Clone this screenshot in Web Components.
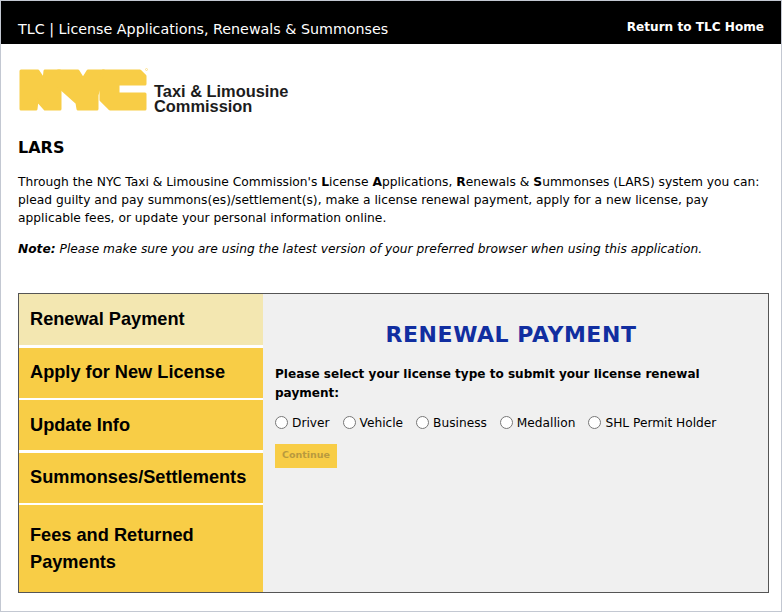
<!doctype html>
<html>
<head>
<meta charset="utf-8">
<title>LARS</title>
<style>
  html, body { margin: 0; height: 100%; background: #fff; }
  body { box-sizing: border-box; height: 612px; border: 1px solid #c3c8d2; overflow: hidden;
    font-family: "DejaVu Sans", Verdana, sans-serif; }
</style>
</head>
<body>
<tlc-header></tlc-header>
<tlc-logo></tlc-logo>
<tlc-intro></tlc-intro>
<tlc-panel>
  <tlc-tab active>Renewal Payment</tlc-tab>
  <tlc-tab>Apply for New License</tlc-tab>
  <tlc-tab>Update Info</tlc-tab>
  <tlc-tab>Summonses/Settlements</tlc-tab>
  <tlc-tab tall>Fees and Returned Payments</tlc-tab>
  <tlc-renewal slot="content"></tlc-renewal>
</tlc-panel>
<script>
class TlcHeader extends HTMLElement {
  constructor() {
    super();
    this.attachShadow({ mode: "open" }).innerHTML = `
      <style>
        :host { display: flex; justify-content: space-between; height: 43px; background: #000; color: #fff;
          padding: 0 17px; }
        #title { font-size: 14.27px; line-height: 17px; margin-top: 20px; }
        #home { font-size: 12.1px; font-weight: bold; line-height: 16px; margin-top: 18px; }
      </style>
      <div id="title">TLC | License Applications, Renewals &amp; Summonses</div>
      <div id="home">Return to TLC Home</div>`;
  }
}

class TlcLogo extends HTMLElement {
  constructor() {
    super();
    this.attachShadow({ mode: "open" }).innerHTML = `
      <style>
        :host { display: flex; height: 44px; margin: 24px 0 0 17px; align-items: flex-end; }
        svg { display: block; width: 130px; height: 44px; flex: none; }
        #name { font: bold 16.4px/15px "Liberation Sans", Arial, sans-serif; color: #1c1c1c; margin: 0 0 -2px 6px; }
      </style>
      <svg viewBox="0 0 130 44" fill="#f8cd46" stroke="#f8cd46" stroke-width="3" stroke-linejoin="round">
        <path d="M3 3H20L26 12L27 3H42V41H27L19 32L18 41H3Z"/>
        <path d="M40 3H60L65 11L70 3H86L79 27V41H60L59 35L40 18Z"/>
        <path d="M85 3H122L127 8V16H100V26H127V41H92L83 32V10Z"/>
        <circle cx="128.5" cy="1.5" r="1" fill="none" stroke-width=".5"/>
      </svg>
      <div id="name">Taxi &amp; Limousine<br>Commission</div>`;
  }
}

class TlcIntro extends HTMLElement {
  constructor() {
    super();
    this.attachShadow({ mode: "open" }).innerHTML = `
      <style>
        :host { display: block; margin: 26px 17px 0; color: #000; font-size: 12.27px; line-height: 18px; }
        h1 { font-size: 16px; line-height: 20px; margin: 0 0 15px; }
        p { margin: 0 0 13px; }
        #note { font-size: 12.22px; }
      </style>
      <h1>LARS</h1>
      <p>Through the NYC Taxi &amp; Limousine Commission's <b>L</b>icense <b>A</b>pplications, <b>R</b>enewals &amp; <b>S</b>ummonses (LARS) system you can: plead guilty and pay summons(es)/settlement(s), make a license renewal payment, apply for a new license, pay applicable fees, or update your personal information online.</p>
      <p id="note"><b><i>Note:</i></b> <i>Please make sure you are using the latest version of your preferred browser when using this application.</i></p>`;
  }
}

class TlcPanel extends HTMLElement {
  constructor() {
    super();
    this.attachShadow({ mode: "open" }).innerHTML = `
      <style>
        :host { display: flex; box-sizing: border-box; height: 300px; width: 751px; margin: 35px 0 0 17px;
          border: 1px solid #555; background: #f0f0f0; }
        #tabs { display: flex; flex-direction: column; gap: 2.5px; width: 244px; flex: none; background: #fff; }
        #content { flex: 1; }
      </style>
      <div id="tabs"><slot></slot></div>
      <div id="content"><slot name="content"></slot></div>`;
  }
}

class TlcTab extends HTMLElement {
  constructor() {
    super();
    this.attachShadow({ mode: "open" }).innerHTML = `
      <style>
        :host { display: flex; align-items: center; box-sizing: border-box; height: 50px; padding: 0 11px;
          background: #f8cd46; color: #000; font: bold 18.2px/27px "Liberation Sans", Arial, sans-serif; }
        :host([active]) { background: #f3e7b1; height: 51px; }
        :host([tall]) { flex: 1; }
      </style>
      <slot></slot>`;
  }
}

class TlcRenewal extends HTMLElement {
  constructor() {
    super();
    this.attachShadow({ mode: "open" }).innerHTML = `
      <style>
        :host { display: block; padding: 27px 12px 0; color: #000; font-size: 12.2px; }
        h2 { margin: 0 9px 16px 0; text-align: center; color: #112ea0; font-size: 22px; line-height: 28px; letter-spacing: .55px; }
        p { margin: 0 0 10px; font-size: 12.05px; font-weight: bold; line-height: 19px; }
        #types { display: flex; gap: 13px; height: 19px; }
        label { display: flex; align-items: center; gap: 4px; }
        input { width: 13px; height: 13px; margin: 0; }
        button { display: block; width: 62px; height: 24px; margin-top: 12px; padding: 0 0 4px; border: 0;
          background: #f8cd46; color: #b89a3e; font: bold 9.5px "DejaVu Sans", Verdana, sans-serif; }
      </style>
      <h2>RENEWAL PAYMENT</h2>
      <p>Please select your license type to submit your license renewal payment:</p>
      <div id="types">
        <label><input type="radio" name="type">Driver</label>
        <label><input type="radio" name="type">Vehicle</label>
        <label><input type="radio" name="type">Business</label>
        <label><input type="radio" name="type">Medallion</label>
        <label><input type="radio" name="type">SHL Permit Holder</label>
      </div>
      <button disabled>Continue</button>`;
  }
}

customElements.define("tlc-header", TlcHeader);
customElements.define("tlc-logo", TlcLogo);
customElements.define("tlc-intro", TlcIntro);
customElements.define("tlc-panel", TlcPanel);
customElements.define("tlc-tab", TlcTab);
customElements.define("tlc-renewal", TlcRenewal);
</script>
</body>
</html>
